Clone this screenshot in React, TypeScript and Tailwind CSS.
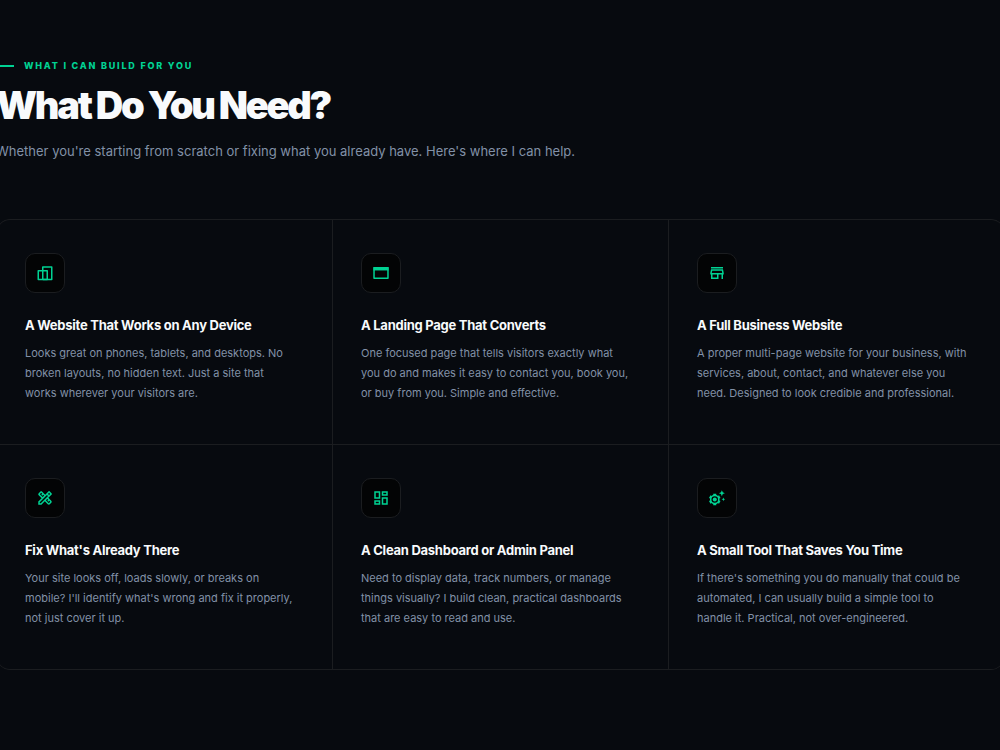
import type { ComponentType } from "react";
import { MdOutlineDashboard, MdOutlineDesignServices, MdOutlineStore } from "react-icons/md";

type IconProps = { className?: string };

function ResponsiveIcon({ className }: IconProps) {
  return (
    <svg viewBox="0 0 24 24" fill="none" stroke="currentColor" strokeWidth="2" strokeLinejoin="round" className={className} aria-hidden="true">
      <path d="M9 20.5V4h12v16.5H9" />
      <path d="M3 9h12v11.5H3z" />
    </svg>
  );
}

function BrowserWindowIcon({ className }: IconProps) {
  return (
    <svg viewBox="0 0 24 24" fill="none" stroke="currentColor" strokeWidth="2" strokeLinejoin="round" className={className} aria-hidden="true">
      <rect x="2.7" y="5" width="18.6" height="14" />
      <path d="M2 4h20v4.6H2z" fill="currentColor" stroke="none" />
    </svg>
  );
}

function AutomationIcon({ className }: IconProps) {
  return (
    <svg viewBox="0 0 24 24" fill="none" stroke="currentColor" strokeWidth="2" className={className} aria-hidden="true">
      <circle cx="9" cy="14" r="5.4" />
      <path
        strokeWidth="4"
        d="M9 9V6.2M9 19v2.8M13.6 11.3l2.1-1.2M13.6 16.7l2.1 1.2M4.4 11.3l-2.1-1.2M4.4 16.7l-2.1 1.2"
      />
      <circle cx="9" cy="14" r="2.7" fill="currentColor" stroke="none" />
      <path fill="currentColor" stroke="none" d="M18.5 1.5l1.2 2.8 2.8 1.2-2.8 1.2-1.2 2.8-1.2-2.8-2.8-1.2 2.8-1.2z" />
      <path fill="currentColor" stroke="none" d="M20.5 11.2l.7 1.8 1.8.7-1.8.7-.7 1.8-.7-1.8-1.8-.7 1.8-.7z" />
    </svg>
  );
}

type Service = { title: string; text: string; Icon: ComponentType<IconProps> };

const services: Service[] = [
  {
    title: "A Website That Works on Any Device",
    text: "Looks great on phones, tablets, and desktops. No broken layouts, no hidden text. Just a site that works wherever your visitors are.",
    Icon: ResponsiveIcon,
  },
  {
    title: "A Landing Page That Converts",
    text: "One focused page that tells visitors exactly what you do and makes it easy to contact you, book you, or buy from you. Simple and effective.",
    Icon: BrowserWindowIcon,
  },
  {
    title: "A Full Business Website",
    text: "A proper multi-page website for your business, with services, about, contact, and whatever else you need. Designed to look credible and professional.",
    Icon: MdOutlineStore,
  },
  {
    title: "Fix What's Already There",
    text: "Your site looks off, loads slowly, or breaks on mobile? I'll identify what's wrong and fix it properly, not just cover it up.",
    Icon: MdOutlineDesignServices,
  },
  {
    title: "A Clean Dashboard or Admin Panel",
    text: "Need to display data, track numbers, or manage things visually? I build clean, practical dashboards that are easy to read and use.",
    Icon: MdOutlineDashboard,
  },
  {
    title: "A Small Tool That Saves You Time",
    text: "If there's something you do manually that could be automated, I can usually build a simple tool to handle it. Practical, not over-engineered.",
    Icon: AutomationIcon,
  },
];

function ServiceCard({ title, text, Icon }: Service) {
  return (
    <article className="bg-[#070a0f] pt-[33px] pr-9 pb-[41px] pl-7">
      <div className="flex size-10 items-center justify-center rounded-[10px] border border-[#1b1d20] bg-[#030405] text-[#00d293]">
        <Icon className="size-[18px]" />
      </div>
      <h3 className="mt-6 text-[13px] leading-4 font-bold tracking-[-0.02em] text-[#f8fafc]">{title}</h3>
      <p className="mt-2.5 text-[11px] leading-5 text-[#8291a7]">{text}</p>
    </article>
  );
}

export default function App() {
  return (
    <main className="min-h-screen overflow-hidden bg-[#070a0f] font-['Inter',sans-serif]">
      <section className="-mr-[5px] -ml-1 pt-[60px] pb-20">
        <header>
          <p className="flex items-center gap-2.5 text-[9px] leading-3 font-extrabold tracking-[0.2em] text-[#00d293] uppercase">
            <span className="h-0.5 w-[18px] bg-[#00d293]" />
            What I can build for you
          </p>
          <h2 className="mt-[11px] text-[38px] leading-[44px] font-black tracking-[-0.06em] text-[#f8fafc]">
            What Do You Need?
          </h2>
          <p className="mt-3 text-[13px] leading-6 text-[#8291a7]">
            Whether you're starting from scratch or fixing what you already have. Here's where I can help.
          </p>
        </header>
        <div className="mt-14 grid grid-cols-3 gap-px overflow-hidden rounded-[14px] border border-[#1b1d20] bg-[#1b1d20]">
          {services.map((service) => (
            <ServiceCard key={service.title} {...service} />
          ))}
        </div>
      </section>
    </main>
  );
}
